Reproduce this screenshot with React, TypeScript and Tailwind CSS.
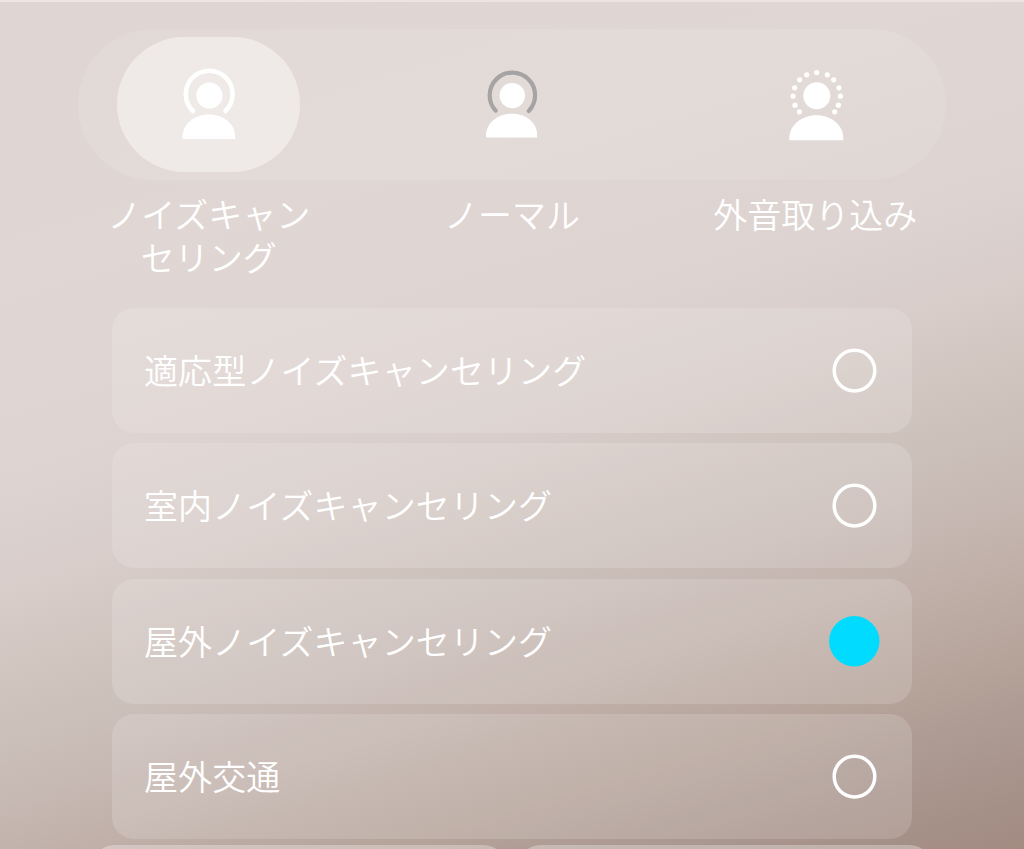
import { useState } from "react"

const DOTS = [
  [31.7, 7.5], [21.7, 9.8], [42.3, 9.8], [14.7, 14.8], [48.7, 14.8], [9.7, 22.8], [54, 22.8],
  [8, 31.2], [55.4, 31.2], [10, 40.2], [53.4, 40.2], [14.4, 46.8], [49.7, 46.8],
]

function CancelingIcon() {
  return (
    <svg viewBox="0 0 64 80" className="h-20 w-16" fill="none">
      <path d="M16 46 A23.4 23.4 0 1 1 48.4 46" stroke="#fff" strokeWidth="4.6" strokeLinecap="round" />
      <circle cx="32.4" cy="30.6" r="13.1" fill="#fff" />
      <path d="M5.6 74 V70.5 C6.3 59 17.3 49.6 32 49.6 S57.7 59 58.1 70.5 V74 Z" fill="#fff" />
    </svg>
  )
}

function NormalIcon() {
  return (
    <svg viewBox="0 0 64 80" className="h-20 w-16" fill="none">
      <path d="M15.6 45.6 A22.7 22.7 0 1 1 48.8 46" stroke="#a5a3a3" strokeWidth="4.2" strokeLinecap="round" />
      <circle cx="32.3" cy="30.6" r="12.7" fill="#fff" />
      <path d="M6 72.4 V69.5 C6.7 58 17.7 48.8 32 48.8 S56.8 58 57.1 69.5 V72.4 Z" fill="#fff" />
    </svg>
  )
}

function AmbientIcon() {
  return (
    <svg viewBox="0 0 64 80" className="ml-[3px] h-20 w-16" fill="#fff">
      {DOTS.map(([x, y]) => (
        <circle key={`${x}-${y}`} cx={x} cy={y} r="2.6" />
      ))}
      <circle cx="31.8" cy="30.8" r="13.5" />
      <path d="M4.3 75.2 V72 C5 60 16.5 50.2 31.5 50.2 S57.7 60 58.2 72 V75.2 Z" />
    </svg>
  )
}

function Radio({ checked }: { checked: boolean }) {
  return (
    <svg viewBox="0 0 51 51" className="size-[51px]" fill="none">
      {checked
        ? <circle cx="25.3" cy="25.2" r="25.2" fill="#00dbff" />
        : <circle cx="25.5" cy="25.6" r="20.3" stroke="#fff" strokeWidth="3.5" />}
    </svg>
  )
}

const modes = [
  { id: "anc", label: "ノイズキャンセリング", icon: CancelingIcon },
  { id: "normal", label: "ノーマル", icon: NormalIcon },
  { id: "ambient", label: "外音取り込み", icon: AmbientIcon },
]

const levels = ["適応型ノイズキャンセリング", "室内ノイズキャンセリング", "屋外ノイズキャンセリング", "屋外交通"]

export default function App() {
  const [mode, setMode] = useState("anc")
  const [level, setLevel] = useState(2)

  return (
    <main
      lang="ja"
      className="h-[849px] w-[1024px] overflow-hidden border-t-2 border-[#eee5e3] bg-[linear-gradient(163deg,#dfd5d2_0%,#e0d7d4_25%,#ddd3d0_42%,#d8cdc9_51%,#d2c6c1_57%,#cbbfba_64%,#c3b3ad_73%,#bdada5_77%,#b6a49b_83%,#ae9c94_88%,#aa978f_91%,#a59087_96%,#a38b82_100%)] pt-[27px] font-['Noto_Sans_CJK_JP',sans-serif] text-[34px] font-[350] text-white"
    >
      <div className="mx-[78px] h-[151px] rounded-full bg-white/10">
        <div className="-mx-[21px] grid h-full grid-cols-3">
          {modes.map(({ id, icon: Icon }) => (
            <button key={id} onClick={() => setMode(id)} className="flex items-center justify-center">
              <span className={`flex h-[135px] w-[183px] items-center justify-center rounded-full ${mode === id ? "bg-[#efeae7]" : ""}`}>
                <Icon />
              </span>
            </button>
          ))}
        </div>
      </div>

      <div className="mx-[57px] mt-3 grid h-[116px] grid-cols-3 text-center leading-[43px]">
        {modes.map(({ id, label }) => (
          <p key={id} className="mx-auto w-[206px] break-all">{label}</p>
        ))}
      </div>

      <ul className="mx-28 flex flex-col gap-[10.4px]">
        {levels.map((name, i) => (
          <li key={name}>
            <button onClick={() => setLevel(i)} className="flex h-[125px] w-full items-center justify-between rounded-[22px] bg-white/15 px-8">
              <span className="pb-0.5 tracking-[0.1px]">{name}</span>
              <Radio checked={level === i} />
            </button>
          </li>
        ))}
      </ul>

      <div className="mx-[91px] mt-[6px] grid grid-cols-2 gap-[10px]">
        <div className="h-32 rounded-3xl bg-white/30" />
        <div className="h-32 rounded-3xl bg-white/30" />
      </div>
    </main>
  )
}
